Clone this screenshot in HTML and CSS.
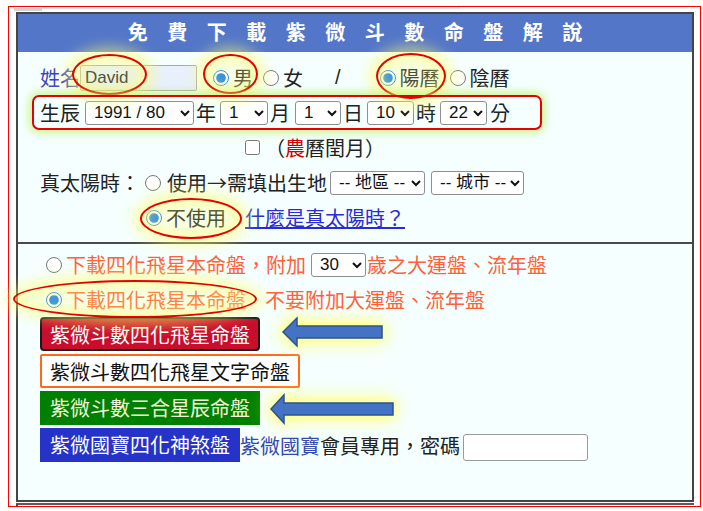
FILE: index.html
```html
<!DOCTYPE html>
<html lang="zh-Hant">
<head>
<meta charset="utf-8">
<title>免費下載紫微斗數命盤解說</title>
<link rel="stylesheet" href="styles.css">
</head>
<body>
<div class="frame">
  <div class="strip"><span class="strip-dark"></span><span class="strip-light"></span></div>
  <div class="panel">
    <div class="title">免費下載紫微斗數命盤解說</div>
    <div class="sec sec-birth">
      <div class="row">
        <span class="lbl-blue">姓名</span><input class="name" type="text" value="David">
        <label class="opt opt-male"><input type="radio" name="sex" checked>男</label>
        <label class="opt opt-next"><input type="radio" name="sex">女</label>
        <span class="slash">/</span>
        <label class="opt opt-solar"><input type="radio" name="cal" checked>陽曆</label>
        <label class="opt opt-next"><input type="radio" name="cal">陰曆</label>
      </div>
      <div class="row">
        <span>生辰</span>
        <select class="sel sel-year"><option>1991 / 80</option></select><span class="unit">年</span>
        <select class="sel sel-month"><option>1</option></select><span class="unit">月</span>
        <select class="sel sel-day"><option>1</option></select><span class="unit">日</span>
        <select class="sel sel-hour"><option>10</option></select><span class="unit">時</span>
        <select class="sel sel-min"><option>22</option></select><span class="unit unit-last">分</span>
      </div>
      <div class="row">
        <input type="checkbox" class="chk"><span>（<span class="red">農</span>曆閏月）</span>
      </div>
      <div class="row">
        <span>真太陽時：</span>
        <label class="opt opt-use"><input type="radio" name="sun">使用→需填出生地</label>
        <select class="sel sel-area"><option>-- 地區 --</option></select>
        <select class="sel sel-city"><option>-- 城市 --</option></select>
      </div>
      <div class="row">
        <label class="opt opt-nouse"><input type="radio" name="sun" checked>不使用</label>
        <a class="help" href="#">什麼是真太陽時？</a>
      </div>
    </div>
    <div class="sec sec-out">
      <div class="row orange">
        <label class="opt opt-mode"><input type="radio" name="mode">下載四化飛星本命盤，附加</label>
        <select class="sel sel-age"><option>30</option></select><span class="after-age">歲之大運盤、流年盤</span>
      </div>
      <div class="row orange">
        <label class="opt opt-mode"><input type="radio" name="mode" checked>下載四化飛星本命盤</label>
        <span class="no-extra">不要附加大運盤、流年盤</span>
      </div>
      <div class="btns">
        <button class="btn btn-red" type="button">紫微斗數四化飛星命盤</button>
        <button class="btn btn-white" type="button">紫微斗數四化飛星文字命盤</button>
        <button class="btn btn-green" type="button">紫微斗數三合星辰命盤</button>
        <div class="member">
          <button class="btn btn-blue" type="button">紫微國寶四化神煞盤</button><span class="gem">紫微國寶</span><span>會員專用，密碼</span><input class="pwd" type="password">
        </div>
      </div>
    </div>
  </div>
  <div class="next"></div>
</div>

<div class="ring ring-david"></div>
<div class="ring ring-male"></div>
<div class="ring ring-solar"></div>
<div class="hl-box"></div>
<div class="ring ring-nouse"></div>
<div class="ring ring-mode"></div>
<svg class="arrow arrow-1" width="104" height="32" viewBox="0 0 104 32"><polygon points="2,16 16,2 16,10 101,10 101,22 16,22 16,30" fill="#4472c4" stroke="#2f528f" stroke-width="1.5"/></svg>
<svg class="arrow arrow-2" width="127" height="33" viewBox="0 0 127 33"><polygon points="2,16 15,2 15,10 124,10 124,22 15,22 15,30" fill="#4472c4" stroke="#2f528f" stroke-width="1.5"/></svg>
</body>
</html>
```

FILE: styles.css
```css
* { box-sizing: border-box; }
html, body { margin: 0; padding: 0; background: #fff; }
body {
  position: relative;
  width: 703px;
  height: 511px;
  overflow: hidden;
  font-family: "Noto Sans CJK TC", "Liberation Sans", sans-serif;
  font-size: 20px;
  color: #222;
}

.frame {
  margin: 6px 0 0 8px;
  width: 693px;
  height: 501px;
  border: 1px solid #ff0000;
  overflow: hidden;
}
.strip { display: flex; height: 4px; padding-left: 5px; }
.strip-dark { width: 28px; height: 3px; margin-top: 1px; background: #d2d2d2; }
.strip-light { width: 418px; height: 2px; background: #ececec; }

.panel {
  margin: 1px 0 0 7px;
  width: 678px;
  height: 490px;
  border: 2px solid #454545;
  background: #f5ffff;
  display: flex;
  flex-direction: column;
}
.next {
  margin: 1px 0 0 7px;
  width: 678px;
  height: 4px;
  border-top: 2px solid #5a5a5a;
  border-left: 2px solid #454545;
}

.title {
  height: 38px;
  flex: none;
  background: #5376c9;
  color: #fff;
  font-weight: 700;
  font-size: 20px;
  line-height: 35px;
  letter-spacing: 19.5px;
  padding-left: 19.5px;
  text-align: center;
  white-space: nowrap;
}

.sec-birth { height: 190px; flex: none; padding: 8px 0 0 22px; }
.sec-out { flex: 1; border-top: 2px solid #4a4a4a; padding: 3px 0 0 22px; }

.row { display: flex; align-items: center; height: 35px; white-space: nowrap; }

.lbl-blue { color: #4040c0; }
.name {
  width: 117px;
  height: 26px;
  border: 1px solid #a9a9a9;
  border-radius: 2px;
  background: #e8f0fe;
  font: 17px "Liberation Sans", sans-serif;
  color: #222;
  padding: 0 4px;
}

.opt { display: inline-flex; align-items: center; }
.opt input[type="radio"] { width: 16px; height: 16px; margin: 0 4px 0 0; }
.opt-male { margin-left: 16px; }
.opt-next { margin-left: 10px; }
.opt-solar { margin-left: 39px; }
.slash { margin-left: 32px; font-family: "Liberation Sans", sans-serif; }
.opt-use { margin-left: 5px; }
.opt-use input[type="radio"] { margin-right: 6px; }
.opt-nouse { margin-left: 106px; }
.opt-mode { margin-left: 6px; }

.sel {
  font-family: "Liberation Sans", "Noto Sans CJK TC", sans-serif;
  font-size: 17px;
  height: 24px;
  border: 1px solid #8f8f8f;
  border-radius: 3px;
  background: #fff;
  color: #111;
  padding: 0 0 0 4px;
}
.unit { margin-left: 2px; }
.unit-last { margin-left: 3px; }
.sel-year { width: 109px; margin-left: 5px; }
.sel-month { width: 48px; margin-left: 4px; }
.sel-day { width: 46px; margin-left: 5px; }
.sel-hour { width: 47px; margin-left: 4px; }
.sel-min { width: 47px; margin-left: 4px; }
.sel-area { width: 95px; margin-left: 3px; }
.sel-city { width: 93px; margin-left: 6px; }
.sel-age { width: 55px; margin-left: 5px; }

.chk { width: 15px; height: 15px; margin: 0 5px 0 205px; }
.red { color: #d40000; }

.help { margin-left: 19px; color: #2a2ad8; text-decoration: underline; }

.orange { color: #ff5f3a; }
.after-age { margin-left: 1px; }
.no-extra { margin-left: 19px; }

.btns { display: flex; flex-direction: column; align-items: flex-start; gap: 3px; }
.btn {
  height: 34px;
  margin: 0;
  padding: 0 10px;
  border: none;
  font-family: "Noto Sans CJK TC", sans-serif;
  font-size: 20px;
  line-height: 32px;
  white-space: nowrap;
}
.btn-red { background: #c80d2d; color: #fff; border: 2px solid #1a1a1a; border-radius: 4px; padding: 0 8px; }
.btn-white { background: #fff; color: #111; border: 2px solid #ff6a1a; border-radius: 2px; padding: 0 8px; }
.btn-green { background: #008000; color: #f6f6dc; }
.btn-blue { background: #2533c8; color: #fff; }

.member { display: flex; align-items: center; white-space: nowrap; }
.gem { color: #3347b0; }
.pwd {
  width: 125px;
  height: 27px;
  margin: 5px 0 0 3px;
  border: 1px solid #9a9a9a;
  border-radius: 3px;
  background: #fff;
}

/* annotation overlays */
.ring, .hl-box, .arrow { position: absolute; pointer-events: none; }
.ring {
  border: 2px solid #e60000;
  border-radius: 50%;
  background: radial-gradient(ellipse at center, rgba(255, 255, 120, 0.18), rgba(255, 255, 110, 0.3));
  box-shadow: 0 0 14px 7px rgba(255, 255, 100, 0.55), inset 0 0 10px 4px rgba(255, 255, 110, 0.45);
}
.ring-david { left: 72px; top: 54px; width: 75px; height: 41px; }
.ring-male { left: 203px; top: 54px; width: 55px; height: 40px; }
.ring-solar { left: 376px; top: 53px; width: 70px; height: 46px; }
.ring-nouse { left: 140px; top: 198px; width: 102px; height: 41px; }
.ring-mode { left: 13px; top: 280px; width: 244px; height: 38px; }
.hl-box {
  left: 32px; top: 95px; width: 510px; height: 35px;
  border: 2px solid #e60000;
  border-radius: 7px;
  box-shadow: 0 0 8px 3px rgba(190, 240, 100, 0.7);
}
.arrow { filter: drop-shadow(0 0 6px #ffff70) drop-shadow(0 0 10px rgba(255, 255, 120, 0.9)); }
.arrow-1 { left: 281px; top: 316px; }
.arrow-2 { left: 269px; top: 393px; }
```
